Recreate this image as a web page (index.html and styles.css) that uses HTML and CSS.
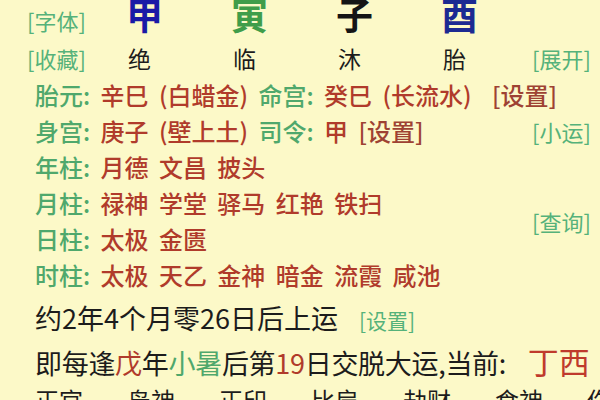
FILE: index.html
```html
<!DOCTYPE html>
<html lang="zh-CN">
<head>
<meta charset="utf-8">
<link rel="stylesheet" href="styles.css">
</head>
<body>
<div class="page">
  <div class="pillars">
    <span class="btn c1 r1">[字体]</span>
    <span class="gan c2 r1 blue">甲</span>
    <span class="gan c3 r1 green">寅</span>
    <span class="gan c4 r1 black">子</span>
    <span class="gan c5 r1 navy">酉</span>
    <span class="btn c1 r2">[收藏]</span>
    <span class="stage c2 r2">绝</span>
    <span class="stage c3 r2">临</span>
    <span class="stage c4 r2">沐</span>
    <span class="stage c5 r2">胎</span>
    <span class="btn c6 r2">[展开]</span>
  </div>

  <div class="info">
    <div class="row wide g1"><span class="lab">胎元:</span> <span class="val">辛巳 (白蜡金)</span> <span class="lab">命宫:</span> <span class="val">癸巳 (长流水)</span> <span class="set far">[设置]</span></div>
    <div class="row g2"><span class="lab">身宫:</span> <span class="val">庚子 (壁上土)</span> <span class="lab">司令:</span> <span class="val">甲</span> <span class="set">[设置]</span></div>
    <span class="btn side g2">[小运]</span>
    <div class="row g3"><span class="lab">年柱:</span> <span class="val">月德 文昌 披头</span></div>
    <div class="row g4"><span class="lab">月柱:</span> <span class="val">禄神 学堂 驿马 红艳 铁扫</span></div>
    <span class="btn side g45">[查询]</span>
    <div class="row g5"><span class="lab">日柱:</span> <span class="val">太极 金匮</span></div>
    <div class="row g6"><span class="lab">时柱:</span> <span class="val">太极 天乙 金神 暗金 流霞 咸池</span></div>
  </div>

  <div class="luck">约2年4个月零26日后上运 <span class="btn small">[设置]</span></div>
  <div class="cycle">即每逢<span class="val">戊</span>年<span class="lab">小暑</span>后第<span class="val">19</span>日交脱大运,当前: <span class="cur">丁西</span></div>

  <div class="gods">
    <span>正官</span><span>枭神</span><span>正印</span><span>比肩</span><span>劫财</span><span>食神</span><span>伤官</span>
  </div>
</div>
</body>
</html>
```

FILE: styles.css
```css
html, body {
  margin: 0;
  padding: 0;
  background: #fcf9c8;
}
body {
  width: 600px;
  height: 400px;
  overflow: hidden;
  font-family: "Noto Sans CJK SC", "Noto Sans", sans-serif;
  color: #1c1c1c;
}
.page {
  display: flex;
  flex-direction: column;
}

/* top pillars */
.pillars {
  display: grid;
  grid-template-columns: 102px 105px 105px 105px 88px 58px;
  grid-template-rows: 40px 36px;
  padding-left: 27px;
  align-items: center;
}
.c1 { grid-column: 1; }
.c2 { grid-column: 2; }
.c3 { grid-column: 3; }
.c4 { grid-column: 4; }
.c5 { grid-column: 5; }
.c6 { grid-column: 6; }
.r1 { grid-row: 1; }
.r2 { grid-row: 2; }

.btn {
  font-size: 22px;
  line-height: 30px;
  color: #55b27a;
  white-space: nowrap;
  font-weight: 400;
}
.gan {
  font-size: 37px;
  font-weight: 700;
  line-height: 36px;
  align-self: start;
  margin-top: -4px;
  margin-left: -3px;
}
.blue { color: #1a1aa6; }
.green { color: #3f9d4a; }
.black { color: #151515; }
.navy { color: #1c2a92; }
.stage {
  font-size: 23px;
  line-height: 30px;
  color: #1c1c1c;
  margin-left: -1px;
}

/* info rows */
.info {
  display: grid;
  grid-template-columns: 1fr 58px;
  grid-template-rows: repeat(6, 36px);
  padding: 1px 10px 0 35px;
  font-size: 24px;
  font-weight: 500;
  line-height: 36px;
  word-spacing: 5px;
  align-items: center;
}
.row {
  grid-column: 1;
  white-space: nowrap;
}
.row.wide { grid-column: 1 / 3; }
.side { grid-column: 2; }
.g1 { grid-row: 1; }
.g2 { grid-row: 2; }
.g3 { grid-row: 3; }
.g4 { grid-row: 4; }
.g45 { grid-row: 4 / 6; }
.g5 { grid-row: 5; }
.g6 { grid-row: 6; }
.info .btn { word-spacing: 0; }

.lab { color: #4fa86c; }
.val { color: #b03b2b; }
.set { color: #9e4233; }
.set.far { margin-left: 10px; }

.luck {
  margin-top: 3px;
  padding-left: 35px;
  font-size: 27px;
  line-height: 44px;
  white-space: nowrap;
}
.btn.small {
  font-size: 21px;
  margin-left: 15px;
}
.cycle {
  padding-left: 35px;
  font-size: 27px;
  line-height: 42px;
  white-space: nowrap;
  letter-spacing: -0.3px;
}
.cur {
  font-size: 31px;
  color: #bf3a2c;
  margin-left: 16px;
  letter-spacing: 0;
}
.gods {
  display: grid;
  grid-template-columns: repeat(7, 92px);
  padding-left: 35px;
  font-size: 24px;
  line-height: 32px;
  white-space: nowrap;
}
```
